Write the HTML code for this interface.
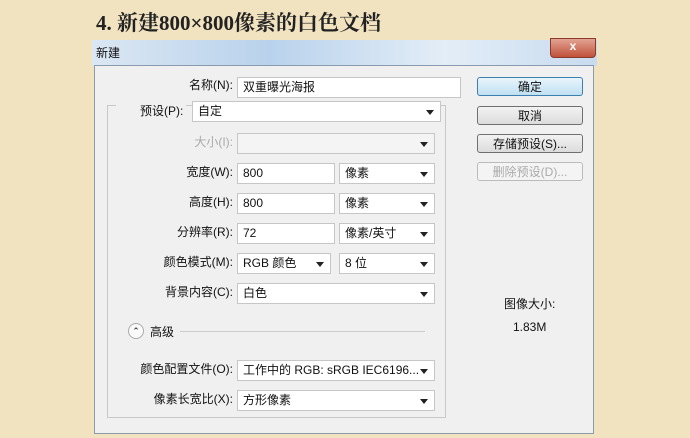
<!DOCTYPE html><html><head><meta charset="utf-8"><style>
body{margin:0;width:690px;height:438px;overflow:hidden;background:#f1e2c0;font-family:"Liberation Sans","Noto Sans CJK SC",sans-serif;font-size:12px;color:#111;position:relative}
.a{position:absolute}
.t{font-family:"Liberation Serif","Noto Serif CJK SC",serif;font-size:21px;font-weight:bold;left:96px;top:7px;color:#222}
.title{left:92px;top:40px;width:505px;height:26px;background:linear-gradient(90deg,#dbe7f3,#b9d2ec 35%,#e3edf7 70%,#c8dbef);}
.body{left:94px;top:65px;width:500px;height:369px;background:#f0f0f0;border:1px solid #8a9bb0;box-sizing:border-box}
.inp{background:#fff;border:1px solid #c6c6c6;box-sizing:border-box;height:21px;padding:2px 5px;line-height:15px}
.sel:after{content:"";position:absolute;right:6px;top:8px;border:4px solid transparent;border-top:5px solid #222}
.lbl{text-align:right;width:140px;left:93px;margin-top:-4px}
.btn{left:477px;width:106px;height:19px;border:1px solid #707070;border-radius:3px;background:linear-gradient(#f2f2f2,#dcdcdc);text-align:center;line-height:18px;box-sizing:border-box}
</style></head><body>
<div class="a t">4. 新建800×800像素的白色文档</div>
<div class="a title"><span style="position:absolute;left:4px;top:4px">新建</span></div>
<div class="a" style="left:550px;top:38px;width:44px;height:18px;background:linear-gradient(#e2a393,#c0513a);border:1px solid #8a3b2c;border-radius:0 0 4px 4px;color:#fff;text-align:center;font-weight:bold;line-height:14px">x</div>
<div class="a body"></div>
<div class="a" style="left:107px;top:105px;width:339px;height:313px;border:1px solid #c8c8c8;box-sizing:border-box"></div>
<div class="a" style="left:116px;top:100px;width:70px;height:12px;background:#f0f0f0"></div>
<div class="a lbl" style="top:80px">名称(N):</div><div class="a inp" style="left:237px;top:77px;width:224px">双重曝光海报</div>
<div class="a" style="left:140px;top:102px">预设(P):</div><div class="a inp sel" style="left:192px;top:101px;width:249px">自定</div>
<div class="a lbl" style="top:137px;color:#aaa">大小(I):</div><div class="a inp sel" style="left:237px;top:133px;width:198px;background:#f4f4f4"></div>
<div class="a lbl" style="top:167px">宽度(W):</div><div class="a inp" style="left:237px;top:163px;width:98px">800</div><div class="a inp sel" style="left:339px;top:163px;width:96px">像素</div>
<div class="a lbl" style="top:197px">高度(H):</div><div class="a inp" style="left:237px;top:193px;width:98px">800</div><div class="a inp sel" style="left:339px;top:193px;width:96px">像素</div>
<div class="a lbl" style="top:227px">分辨率(R):</div><div class="a inp" style="left:237px;top:223px;width:98px">72</div><div class="a inp sel" style="left:339px;top:223px;width:96px">像素/英寸</div>
<div class="a lbl" style="top:257px">颜色模式(M):</div><div class="a inp sel" style="left:237px;top:253px;width:94px">RGB 颜色</div><div class="a inp sel" style="left:339px;top:253px;width:96px">8 位</div>
<div class="a lbl" style="top:287px">背景内容(C):</div><div class="a inp sel" style="left:237px;top:283px;width:198px">白色</div>
<div class="a" style="left:128px;top:323px;width:14px;height:14px;border:1px solid #aaa;border-radius:50%;background:#fafafa;font-size:9px;text-align:center;line-height:14px">⌃</div>
<div class="a" style="left:150px;top:323px">高级</div><div class="a" style="left:180px;top:331px;width:245px;border-top:1px solid #ccc"></div>
<div class="a lbl" style="top:364px">颜色配置文件(O):</div><div class="a inp sel" style="left:237px;top:360px;width:198px">工作中的 RGB: sRGB IEC6196...</div>
<div class="a lbl" style="top:394px">像素长宽比(X):</div><div class="a inp sel" style="left:237px;top:390px;width:198px">方形像素</div>
<div class="a btn" style="top:77px;border-color:#3c7fb1;background:linear-gradient(#e9f5fc,#bfe0f2)">确定</div>
<div class="a btn" style="top:106px">取消</div>
<div class="a btn" style="top:134px">存储预设(S)...</div>
<div class="a btn" style="top:162px;color:#aaa;border-color:#bbb;background:#f4f4f4">删除预设(D)...</div>
<div class="a" style="left:504px;top:295px">图像大小:</div>
<div class="a" style="left:513px;top:320px">1.83M</div>
</body></html>
